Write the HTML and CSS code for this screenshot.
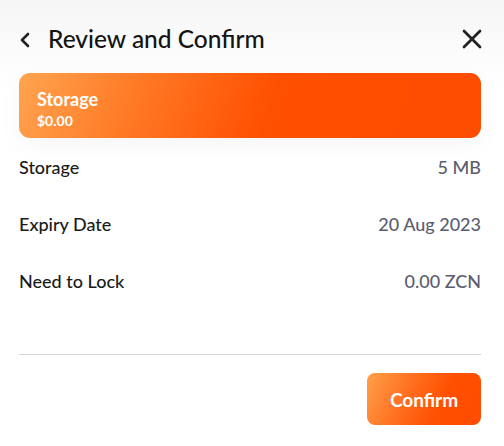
FILE: index.html
```html
<!DOCTYPE html>
<html>
<head>
<meta charset="utf-8">
<link rel="stylesheet" href="styles.css">
</head>
<body>
<div class="panel">
  <div class="header">
    <div class="title-wrap">
      <svg class="back" width="12" height="16" viewBox="0 0 12 16"><path d="M9 2 L3 8 L9 14" fill="none" stroke="#222" stroke-width="2.6" stroke-linecap="round" stroke-linejoin="round"/></svg>
      <h1 class="title">Review and Confirm</h1>
    </div>
    <svg class="close" width="20" height="20" viewBox="0 0 20 20"><path d="M2 2 L18 18 M18 2 L2 18" fill="none" stroke="#222" stroke-width="2.8" stroke-linecap="round"/></svg>
  </div>
  <div class="card">
    <div class="card-title">Storage</div>
    <div class="card-price">$0.00</div>
  </div>
  <div class="rows">
    <div class="row"><span class="label">Storage</span><span class="value">5 MB</span></div>
    <div class="row"><span class="label">Expiry Date</span><span class="value">20 Aug 2023</span></div>
    <div class="row"><span class="label">Need to Lock</span><span class="value">0.00 ZCN</span></div>
  </div>
  <div class="divider"></div>
  <div class="actions">
    <button class="confirm">Confirm</button>
  </div>
</div>
</body>
</html>
```
FILE: styles.css
```css
html, body {
  margin: 0;
  padding: 0;
}
body {
  background: linear-gradient(180deg, #f6f6f6 0px, #ffffff 90px);
  font-family: "Lato", "Open Sans", sans-serif;
  color: #1c1c1c;
  width: 504px;
  height: 446px;
  overflow: hidden;
}
.panel {
  padding: 24px 23px 0 19px;
  display: flex;
  flex-direction: column;
}
.header {
  display: flex;
  align-items: center;
  justify-content: space-between;
  height: 30px;
}
.title-wrap {
  display: flex;
  align-items: center;
  gap: 17px;
}
.back {
  display: block;
  margin-top: 2px;
}
.title {
  margin: 0;
  font-size: 24.5px;
  font-weight: 500;
  line-height: 30px;
  color: #141414;
}
.close {
  display: block;
  margin-right: -1px;
}
.card {
  margin-top: 19px;
  height: 65px;
  box-sizing: border-box;
  border-radius: 11px;
  background: linear-gradient(110deg, #ffa450 0%, #ff7a26 25%, #ff4f00 55%, #ff4d00 100%);
  box-shadow: 0 8px 24px rgba(0, 0, 0, 0.04);
  padding: 16px 18px 0 18px;
  color: #fff;
}
.card-title {
  font-size: 18px;
  font-weight: 700;
  line-height: 20px;
}
.card-price {
  font-size: 14px;
  font-weight: 700;
  line-height: 16px;
  margin-top: 4px;
}
.rows {
  display: flex;
  flex-direction: column;
}
.row {
  height: 57px;
  display: flex;
  align-items: center;
  justify-content: space-between;
  font-size: 18px;
  font-weight: 500;
}
.label {
  color: #1a1a1a;
}
.value {
  color: #5a5d70;
}
.divider {
  margin-top: 45px;
  height: 1px;
  background: #d4d4d4;
}
.actions {
  display: flex;
  justify-content: flex-end;
  margin-top: 18px;
}
.confirm {
  width: 114px;
  height: 52px;
  border: none;
  border-radius: 8px;
  background: linear-gradient(115deg, #ffa04a 0%, #ff6a1a 40%, #ff4f00 65%, #ff4d00 100%);
  color: #fff;
  font-family: "Lato", sans-serif;
  font-size: 19px;
  font-weight: 700;
  padding: 0;
}
```
